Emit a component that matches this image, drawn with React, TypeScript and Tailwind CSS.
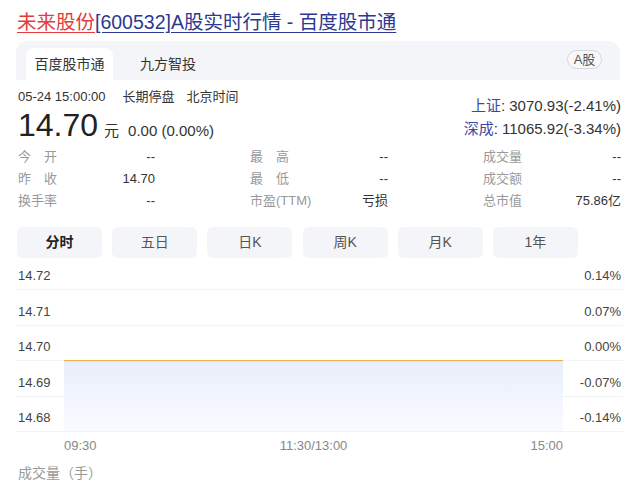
const stats = [
  [
    { label: "今\u3000开", value: "--" },
    { label: "最\u3000高", value: "--" },
    { label: "成交量", value: "--" },
  ],
  [
    { label: "昨\u3000收", value: "14.70" },
    { label: "最\u3000低", value: "--" },
    { label: "成交额", value: "--" },
  ],
  [
    { label: "换手率", value: "--" },
    { label: "市盈(TTM)", value: "亏损" },
    { label: "总市值", value: "75.86亿" },
  ],
];

const periods = ["分时", "五日", "日K", "周K", "月K", "1年"];

const axis = [
  { price: "14.72", pct: "0.14%" },
  { price: "14.71", pct: "0.07%" },
  { price: "14.70", pct: "0.00%" },
  { price: "14.69", pct: "-0.07%" },
  { price: "14.68", pct: "-0.14%" },
];

export default function App() {
  return (
    <div className="w-[640px] h-[487px] overflow-hidden bg-white text-[#333] font-[family-name:Liberation_Sans,Noto_Sans_CJK_SC,sans-serif]">
      {/* Title */}
      <div className="pl-[17px] pt-[9px] text-[19.5px] leading-[26px] whitespace-nowrap">
        <a className="text-[#e23c40] underline underline-offset-[3px]">未来股份</a>
        <a className="text-[#2b3a90] underline underline-offset-[3px]">
          [600532]A股实时行情 - 百度股市通
        </a>
      </div>

      {/* Source tabs */}
      <div className="ml-4 mr-[20px] mt-[6px] h-[39px] bg-[#f4f5f8] rounded-t-xl flex items-end pl-[10px] pr-[18px]">
        <div className="h-[32px] w-[87px] bg-white rounded-t-lg flex items-center justify-center text-[14px] text-[#333]">
          百度股市通
        </div>
        <div className="h-[32px] ml-[27px] flex items-center text-[14px] text-[#333]">
          九方智投
        </div>
        <div className="ml-auto mb-[11px] h-[19px] w-[35px] rounded-full border border-[#d6d8de] bg-[#f7f8fa] flex items-center justify-center text-[13px] text-[#555]">
          A股
        </div>
      </div>

      {/* Quote header */}
      <div className="flex justify-between pl-[18px] pr-[19px]">
        <div>
          <div className="pt-[8px] text-[13px] leading-[18px] text-[#333] whitespace-nowrap">
            <span>05-24 15:00:00</span>
            <span className="ml-[17px]">长期停盘</span>
            <span className="ml-[12px]">北京时间</span>
          </div>
          <div className="flex items-baseline h-[38px] whitespace-nowrap">
            <span className="text-[32px] leading-[38px] text-[#222]">14.70</span>
            <span className="ml-[6px] text-[15px] text-[#333]">元</span>
            <span className="ml-[9px] text-[15px] text-[#333]">0.00 (0.00%)</span>
          </div>
        </div>
        <div className="pt-[14px] text-[15px] leading-[23px] text-right text-[#333] whitespace-nowrap">
          <div>
            <span className="text-[#3b4a9e]">上证</span>: 3070.93(-2.41%)
          </div>
          <div>
            <span className="text-[#3b4a9e]">深成</span>: 11065.92(-3.34%)
          </div>
        </div>
      </div>

      {/* Stats */}
      <div className="mt-[2px] pl-[18px] pr-[19px] grid grid-cols-[137px_138px_138px] justify-between text-[13px] leading-[22px]">
        {stats.flat().map((s, i) => (
          <div key={i} className="flex justify-between">
            <span className="text-[#999]">{s.label}</span>
            <span className="text-[#333]">{s.value}</span>
          </div>
        ))}
      </div>

      {/* Period tabs */}
      <div className="mt-[15px] pl-[17px] flex gap-[10.2px]">
        {periods.map((p, i) => (
          <div
            key={p}
            className={`w-[85px] h-[31px] rounded-md bg-[#f4f5f8] flex items-center justify-center text-[14px] ${i === 0 ? "font-bold text-[#222]" : "text-[#555]"}`}
          >
            {p}
          </div>
        ))}
      </div>

      {/* Chart */}
      <div className="relative ml-4 mr-[17px]">
        {axis.map((a, i) => (
          <div
            key={a.price}
            className={`flex items-end justify-between border-b border-[#f2f3f6] pl-[2px] pr-[2px] pb-[5px] text-[13px] leading-[16px] text-[#444] ${i === 0 ? "h-[32px]" : "h-[35.5px]"}`}
          >
            <span>{a.price}</span>
            <span>{a.pct}</span>
          </div>
        ))}
        {/* price line + area */}
        <div className="absolute left-[48px] w-[499px] top-[102px] h-[1px] bg-[#e4b446]" />
        <div className="absolute left-[48px] w-[499px] top-[103px] h-[1px] bg-[#f4e6e8]" />
        <div className="absolute left-[48px] w-[499px] top-[104px] h-[69px] bg-gradient-to-b from-[#e8eefb] to-[#fafbff]" />
      </div>

      {/* Time axis */}
      <div className="pt-[6px] ml-[64px] w-[499px] flex justify-between text-[13px] leading-[16px] text-[#888]">
        <span>09:30</span>
        <span>11:30/13:00</span>
        <span>15:00</span>
      </div>

      <div className="mt-[9px] pl-[18px] text-[14px] leading-[20px] text-[#999]">成交量（手）</div>
    </div>
  );
}
